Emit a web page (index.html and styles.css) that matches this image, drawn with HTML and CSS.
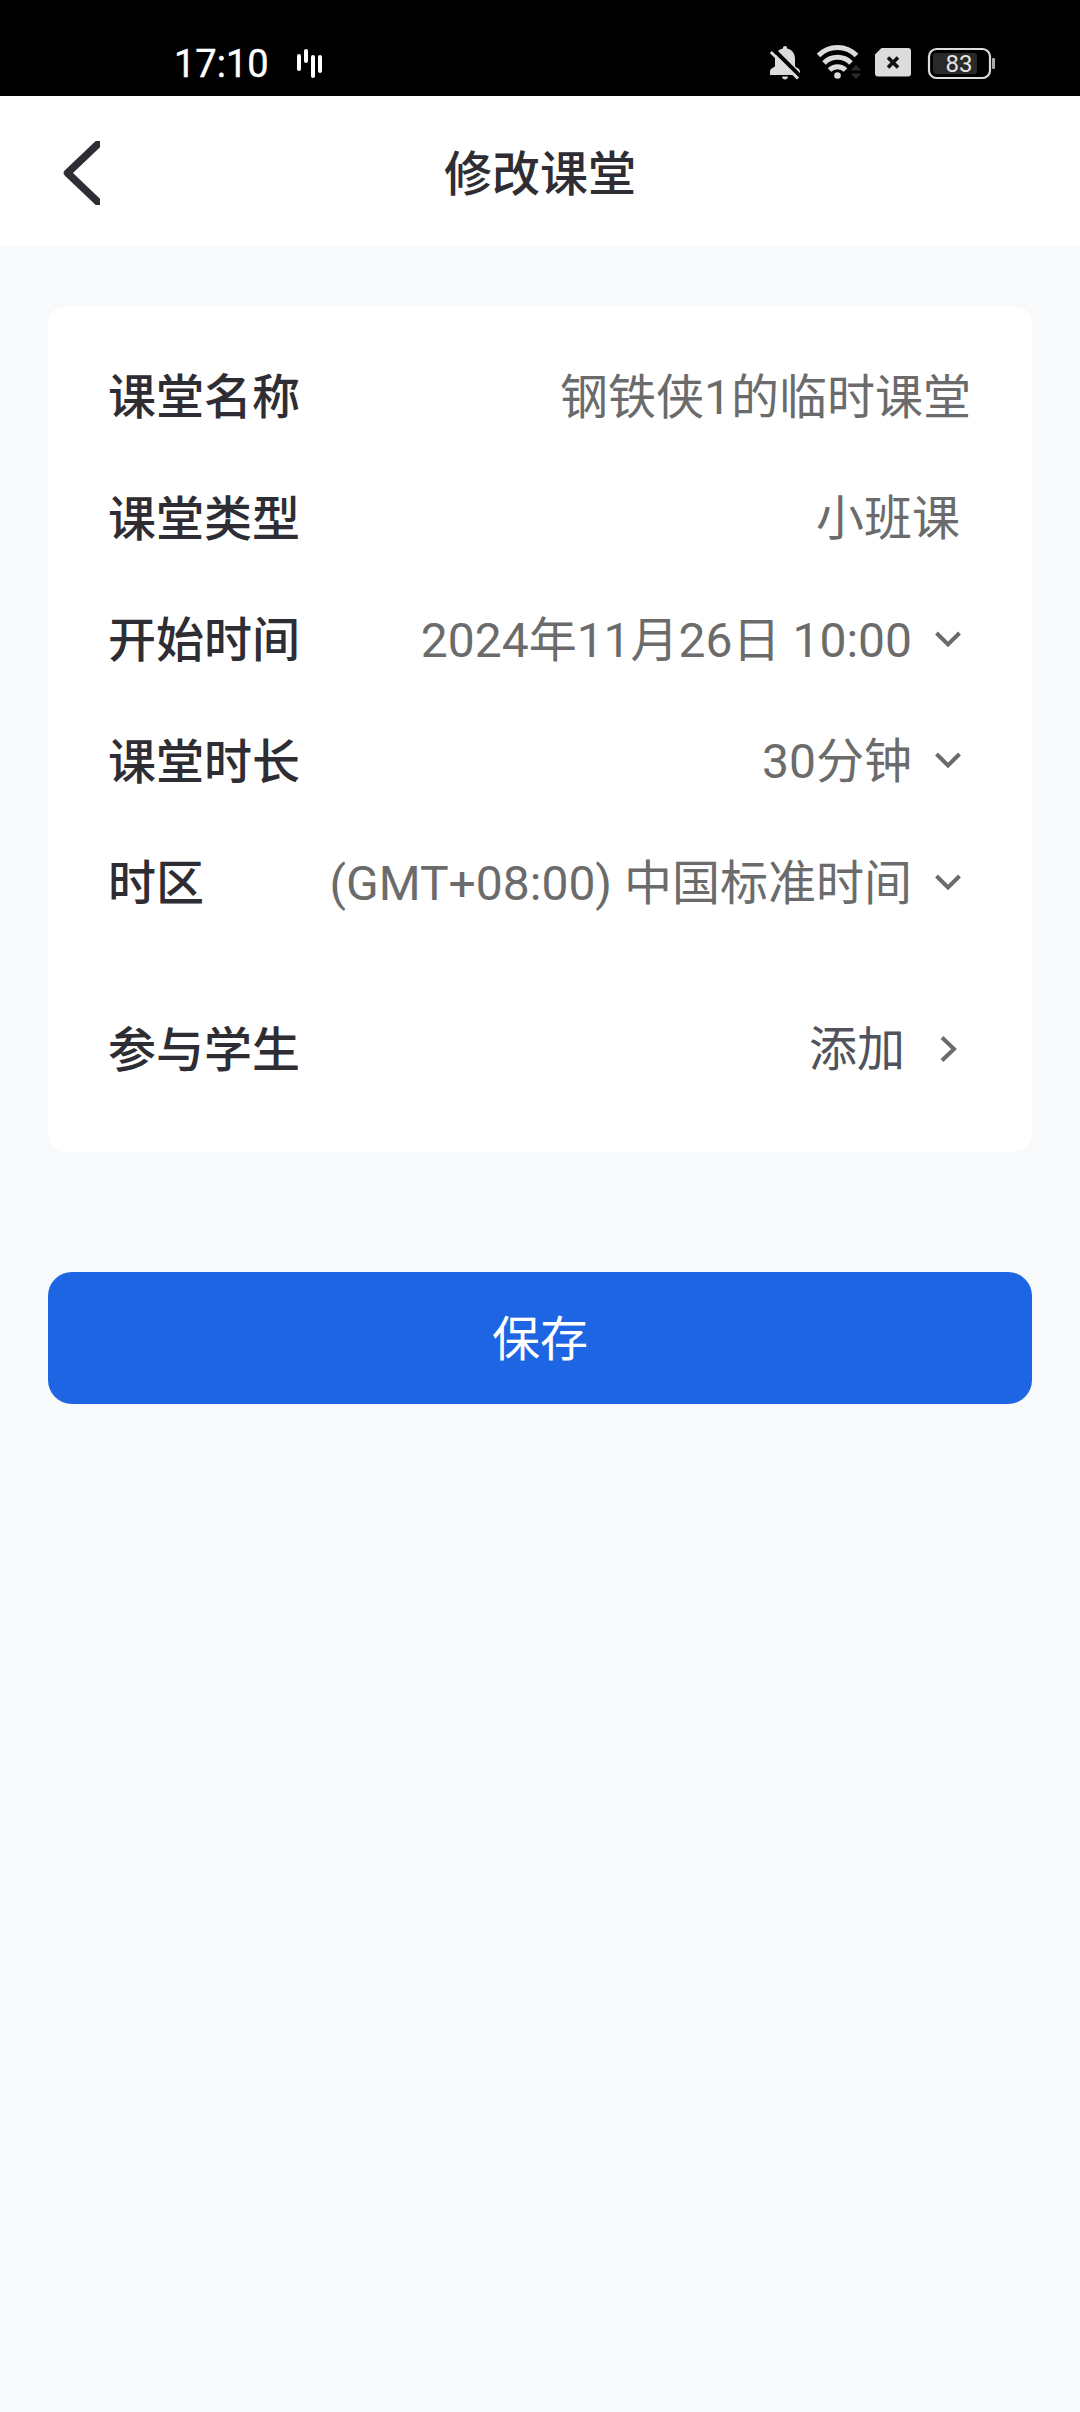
FILE: index.html
```html
<!DOCTYPE html>
<html lang="zh-CN">
<head>
<meta charset="utf-8">
<title>修改课堂</title>
<link rel="stylesheet" href="styles.css">
</head>
<body>
<div class="status">
  <span class="clock">17:10</span>
  <svg class="bars" width="26" height="30" viewBox="0 0 26 30" fill="#fff">
    <rect x="0" y="5" width="4" height="17" rx="2"/>
    <rect x="7" y="0" width="4" height="14" rx="2"/>
    <rect x="14" y="6" width="4" height="23" rx="2"/>
    <rect x="21" y="6" width="4" height="18" rx="2"/>
  </svg>
  <svg class="system" width="230" height="40" viewBox="766 43 230 40">
    <g fill="#dcdcdc">
      <path d="M783 47.500q0-1.500 2-1.500t2 1.500v1c5 1 8 5 8 10v7.500c0 1.500 5 2 5 5.500v3.500H770v-3.500c0-3.500 5-4 5-5.500V58.500c0-5 3-9 8-10z"/>
      <path d="M782 76.500h6q-.5 3-3 3t-3-3z"/>
    </g>
    <path d="M772.500 48.500 800 76" stroke="#000" stroke-width="4"/>
    <path d="M770.800 52 798 78.500" stroke="#dcdcdc" stroke-width="3"/>
    <g fill="none" stroke="#dcdcdc" stroke-width="5">
      <path d="M818.500 55.500a26.500 26.500 0 0 1 38 0"/>
      <path d="M824 63a19 19 0 0 1 27 0"/>
      <path d="M829.500 70a11.500 11.500 0 0 1 16 0"/>
    </g>
    <circle cx="837.500" cy="75.500" r="3.300" fill="#dcdcdc"/>
    <path d="m850.500 70.500 5.500-6 5.500 6zM850.500 73.500h11l-5.500 5.500z" fill="#292929"/>
    <path d="M881.500 48H908q3 0 3 3v22.500q0 3-3 3H878q-3 0-3-3V54.500z" fill="#dcdcdc"/>
    <path d="m888 57.500 10 10m0-10-10 10" stroke="#111" stroke-width="3.600"/>
    <rect x="929" y="49" width="61" height="29" rx="7.500" fill="none" stroke="#dcdcdc" stroke-width="2.200"/>
    <rect x="933" y="53" width="44" height="21" rx="3" fill="#292929"/>
    <rect x="992" y="58" width="3" height="11" rx="1" fill="#aaa"/>
    <text class="battery" x="959" y="72" text-anchor="middle">83</text>
  </svg>
</div>
<header class="header">
  <svg class="back" width="37" height="64" viewBox="0 0 37 64"><path d="M35 3 4.500 32 35 61" fill="none" stroke="#2e2d36" stroke-width="7.500" stroke-linecap="round" stroke-linejoin="round"/></svg>
  <h1 class="title">修改课堂</h1>
</header>
<main class="content">
  <section class="card">
    <div class="row"><span class="label">课堂名称</span><span class="value value-name">钢铁侠1的临时课堂</span></div>
    <div class="row row-type"><span class="label">课堂类型</span><span class="value">小班课</span></div>
    <div class="row row-pick"><span class="label">开始时间</span><span class="value">2024年11月26日 10:00</span><svg class="chevron" width="28" height="18" viewBox="0 0 28 18"><path d="m2.500 2 11.500 11.500L25.500 2"/></svg></div>
    <div class="row row-pick"><span class="label">课堂时长</span><span class="value">30分钟</span><svg class="chevron" width="28" height="18" viewBox="0 0 28 18"><path d="m2.500 2 11.500 11.500L25.500 2"/></svg></div>
    <div class="row row-pick"><span class="label">时区</span><span class="value">(GMT+08:00) 中国标准时间</span><svg class="chevron" width="28" height="18" viewBox="0 0 28 18"><path d="m2.500 2 11.500 11.500L25.500 2"/></svg></div>
    <div class="row row-students"><span class="label">参与学生</span><span class="value add">添加</span><svg class="chevron" width="18" height="28" viewBox="0 0 18 28"><path d="m2 2.500 12 11.500L2 25.500"/></svg></div>
  </section>
  <button class="save" type="button">保存</button>
</main>
</body>
</html>
```

FILE: styles.css
```css
* { box-sizing: border-box; }

body {
  margin: 0;
  min-height: 2412px;
  background: #f7f9fb;
  color: #2e2d33;
  font-family: Roboto, "Noto Sans CJK SC", sans-serif;
  font-size: 48px;
  line-height: 72px;
}

svg { display: block; flex: none; }

.status {
  display: flex;
  height: 96px;
  padding: 0 84px 0 174px;
  background: #000;
  color: #fff;
}

.clock {
  padding-top: 42px;
  font-size: 38px;
  line-height: 44px;
  font-weight: 400;
  -webkit-text-stroke: 0.4px #fff;
}

.bars { margin: 49px 0 0 auto; }
.system { margin: 43px 0 0 443px; }

.battery {
  fill: #e4e4e4;
  font-size: 24px;
  font-weight: 400;
}

.header {
  display: grid;
  grid-template-columns: 100px 1fr 100px;
  align-items: center;
  height: 150px;
  padding-top: 4px;
  background: #fff;
}

.back { justify-self: end; }

.title {
  margin: 4px 0 0;
  font-size: 48px;
  font-weight: 500;
  text-align: center;
}

.content { padding: 60px 48px 0; }

.card {
  height: 846px;
  padding: 30px 60px 0;
  border-radius: 18px;
  background: #fff;
}

.row {
  display: flex;
  align-items: center;
  height: 121.5px;
}

.label {
  padding-top: 3px;
  font-weight: 500;
}

.value {
  margin-left: auto;
  padding-top: 2px;
  color: #6b6b6b;
  white-space: nowrap;
}

.value-name { margin-right: 1px; }

.row-type { padding-right: 12px; }
.row-pick { padding-right: 10px; }

.chevron {
  margin-left: 22px;
  fill: none;
  stroke: #6b6b6b;
  stroke-width: 4;
}

.row-students {
  margin-top: 45px;
  padding-right: 14px;
}

.row-students .chevron { margin-left: 35px; }
.add { color: #50525c; }

.save {
  display: block;
  width: 100%;
  height: 132px;
  margin-top: 120px;
  padding: 4px 0 0;
  border: 0;
  border-radius: 24px;
  background: #1e65e3;
  color: #fff;
  font: inherit;
}
```
